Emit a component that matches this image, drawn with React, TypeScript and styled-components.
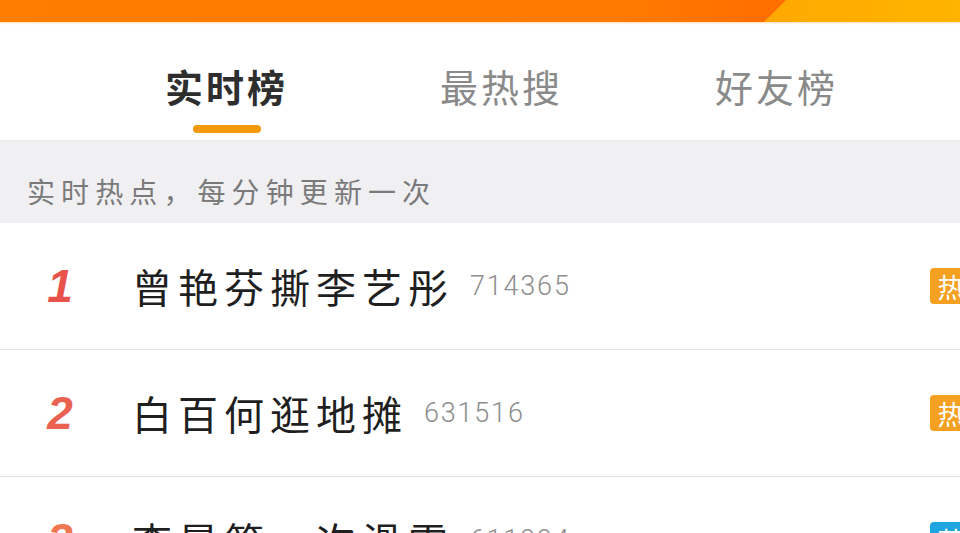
import styled, { createGlobalStyle } from 'styled-components';

const GlobalStyle = createGlobalStyle`
  html, body {
    margin: 0;
    padding: 0;
    background: #ffffff;
    overflow: hidden;
  }
  body {
    font-family: "Noto Sans CJK SC", "Noto Sans", sans-serif;
  }
`;

interface HotItem {
  rank: number;
  title: string;
  count: string;
  badge: 'hot' | 'rec';
}

const items: HotItem[] = [
  { rank: 1, title: '曾艳芬撕李艺彤', count: '714365', badge: 'hot' },
  { rank: 2, title: '白百何逛地摊', count: '631516', badge: 'hot' },
  { rank: 3, title: '李晨第一次滑雪', count: '611994', badge: 'rec' },
];

const tabs = ['实时榜', '最热搜', '好友榜'];

const rankColors = ['#e8524b', '#ea6252', '#ee7650'];

const App = () => {
  return (
    <Page>
      <GlobalStyle />
      <TopBar />
      <TabBar>
        {tabs.map((t, i) => (
          <Tab key={t}>
            <TabLabel $active={i === 0}>{t}</TabLabel>
            <Indicator $active={i === 0} />
          </Tab>
        ))}
      </TabBar>
      <Notice>实时热点，每分钟更新一次</Notice>
      <List>
        {items.map((item, i) => (
          <Row key={item.rank}>
            <Rank $color={rankColors[i]}>{item.rank}</Rank>
            <Title>{item.title}</Title>
            <Count>{item.count}</Count>
            <Badge $kind={item.badge}>{item.badge === 'hot' ? '热' : '荐'}</Badge>
          </Row>
        ))}
      </List>
    </Page>
  );
};

const Page = styled.div`
  width: 960px;
  height: 533px;
  overflow: hidden;
  background: #ffffff;
`;

const TopBar = styled.div`
  position: relative;
  height: 22px;
  background: linear-gradient(90deg, #ff7d00 0%, #ff7a00 65%, #ff6e00 80%);
  box-shadow: 0 1px 2px rgba(240, 150, 40, 0.35);

  &::after {
    content: '';
    position: absolute;
    top: 0;
    bottom: 0;
    left: 764px;
    right: 0;
    background: linear-gradient(90deg, #ffa800, #ffb400);
    clip-path: polygon(22px 0, 100% 0, 100% 100%, 0 100%);
  }
`;

const TabBar = styled.div`
  display: flex;
  height: 118px;
  padding-left: 89px;
  box-sizing: border-box;
`;

const Tab = styled.div`
  width: 275px;
  display: flex;
  flex-direction: column;
  align-items: center;
  padding-top: 41px;
`;

const TabLabel = styled.div<{ $active: boolean }>`
  font-size: 38px;
  line-height: 46px;
  letter-spacing: 3px;
  font-weight: ${p => (p.$active ? 700 : 400)};
  color: ${p => (p.$active ? '#2e2e2e' : '#8a8a8a')};
`;

const Indicator = styled.div<{ $active: boolean }>`
  margin-top: 16px;
  width: 68px;
  height: 8px;
  border-radius: 4px;
  background: ${p => (p.$active ? '#f39a0c' : 'transparent')};
`;

const Notice = styled.div`
  height: 83px;
  box-sizing: border-box;
  padding: 32px 0 0 27px;
  background: #f0eff2;
  border-top: 1px solid #ebeaed;
  font-size: 28px;
  line-height: 36px;
  letter-spacing: 6.1px;
  color: #7a7a7a;
`;

const List = styled.div`
  display: flex;
  flex-direction: column;
`;

const Row = styled.div`
  display: flex;
  align-items: center;
  height: 127px;
  box-sizing: border-box;
  border-bottom: 1px solid #e4e4e4;
`;

const Rank = styled.div<{ $color: string }>`
  width: 120px;
  flex-shrink: 0;
  text-align: center;
  font-family: "Liberation Sans", Arial, sans-serif;
  font-size: 46px;
  font-weight: 700;
  font-style: italic;
  color: ${p => p.$color};
`;

const Title = styled.div`
  margin-left: 12px;
  font-size: 40px;
  letter-spacing: 6px;
  color: #1f1f1f;
  white-space: nowrap;
`;

const Count = styled.div`
  margin-left: 16px;
  font-family: Roboto, "Liberation Sans", sans-serif;
  font-size: 27px;
  letter-spacing: 1.8px;
  font-weight: 300;
  color: #8e8e8e;
`;

const Badge = styled.div<{ $kind: 'hot' | 'rec' }>`
  margin-left: auto;
  margin-right: -12px;
  width: 42px;
  height: 36px;
  border-radius: 4px;
  display: flex;
  align-items: center;
  justify-content: center;
  font-size: 27px;
  color: #ffffff;
  background: ${p => (p.$kind === 'hot' ? '#f5a020' : '#1fa4e2')};
`;

export default App;
